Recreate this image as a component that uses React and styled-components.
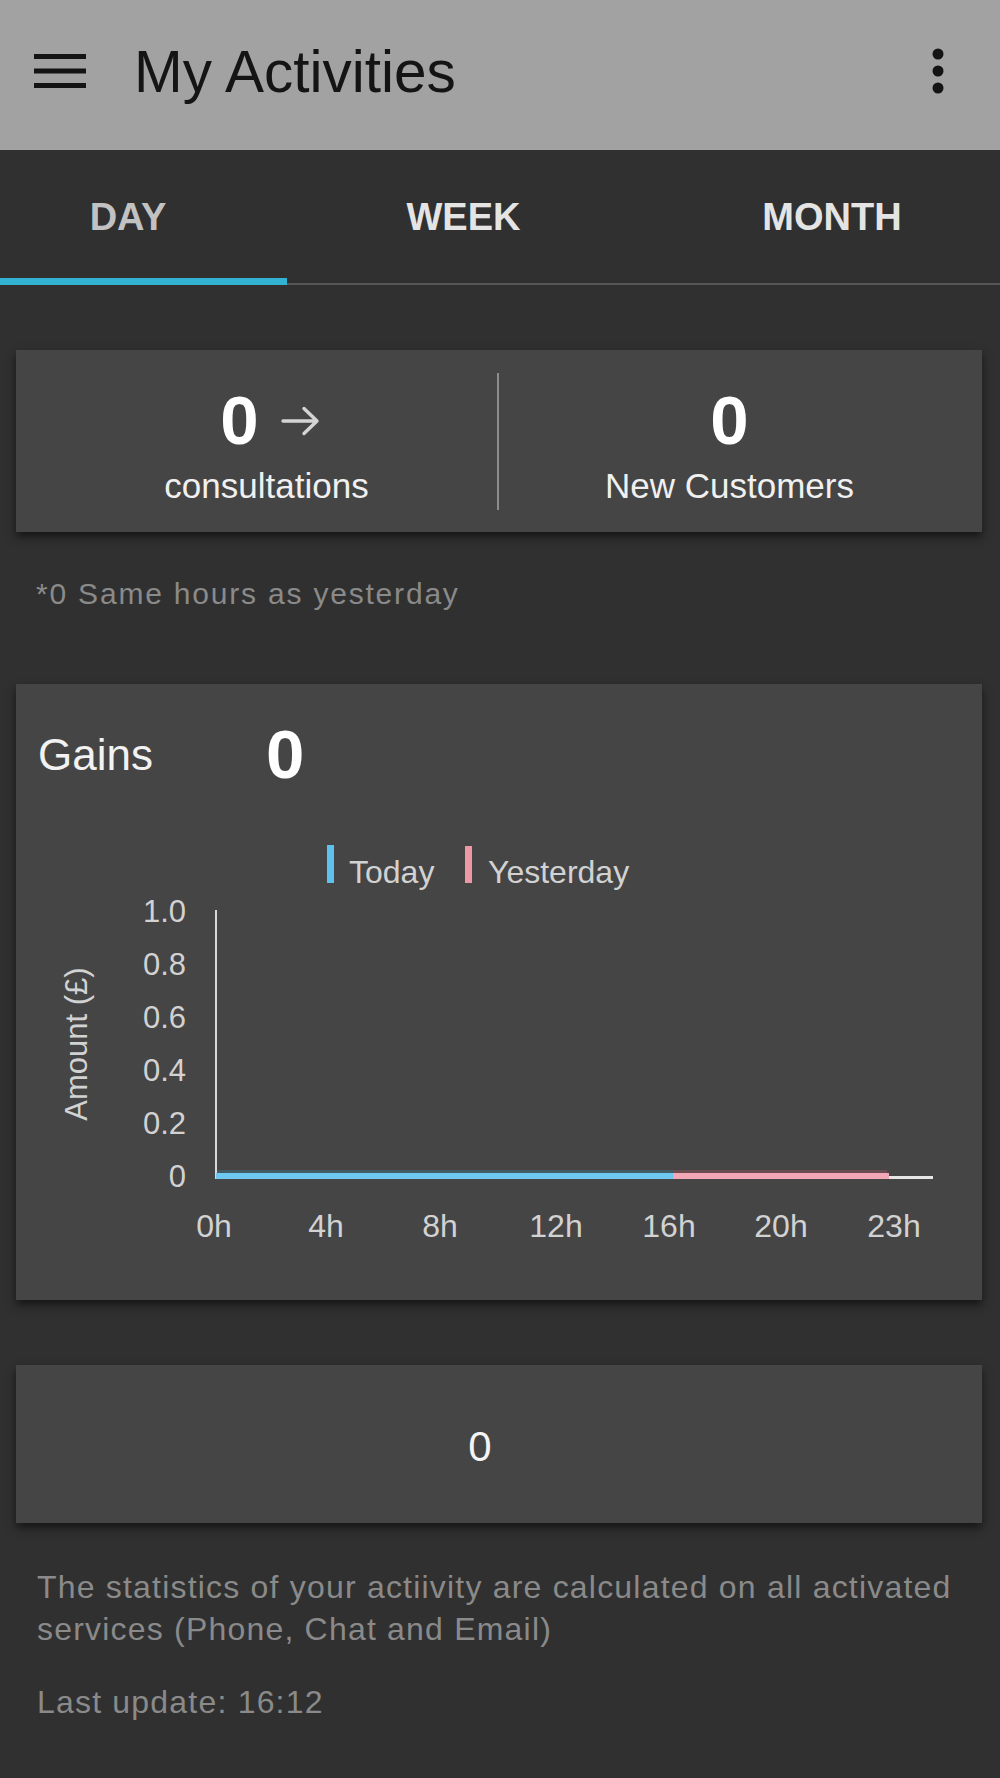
import React from "react";
import styled, { createGlobalStyle } from "styled-components";

const GlobalStyle = createGlobalStyle`
  html, body {
    margin: 0;
    padding: 0;
    background: #303030;
  }
  body {
    font-family: "Liberation Sans", Arial, Helvetica, sans-serif;
  }
  * { box-sizing: border-box; }
`;

const Page = styled.div`
  min-height: 1778px;
  background: #303030;
  display: flex;
  flex-direction: column;
`;

const AppBar = styled.header`
  height: 150px;
  background: #a2a2a2;
  display: flex;
  align-items: center;
  padding: 0 56px 8px 34px;
`;

const MenuIcon = styled.svg`
  display: block;
  flex: none;
`;

const Title = styled.h1`
  margin: 0 0 0 48px;
  font-size: 58.5px;
  line-height: 1;
  font-weight: 400;
  color: #141414;
  flex: 1;
  padding-top: 3px;
`;

const TabBar = styled.nav`
  height: 135px;
  display: flex;
  box-shadow: inset 0 -2px 0 #575757;
`;

const Tab = styled.div`
  width: ${(p) => p.$w}px;
  flex: none;
  display: flex;
  align-items: center;
  justify-content: center;
  padding: 6px ${(p) => p.$pr || 0}px 0 ${(p) => p.$pl || 0}px;
  border-bottom: 7px solid ${(p) => (p.$active ? "#33b3d1" : "transparent")};
  font-size: 38px;
  line-height: 1;
  font-weight: 700;
  color: ${(p) => (p.$active ? "#c2c2c2" : "#e4e4e4")};
`;

const Card = styled.section`
  margin: 0 18px 0 16px;
  background: #454545;
  box-shadow: 0 5px 9px rgba(0, 0, 0, 0.55);
`;

const StatsCard = styled(Card)`
  margin-top: 65px;
  height: 182px;
  display: flex;
  align-items: center;
`;

const StatCol = styled.div`
  flex: 1;
  display: flex;
  flex-direction: column;
  align-items: center;
  padding: 12px ${(p) => p.$pr || 0}px 0 ${(p) => p.$pl || 0}px;
`;

const NumberRow = styled.div`
  display: flex;
  align-items: center;
  gap: 22px;
  height: 66px;
  margin-left: ${(p) => p.$shift || 0}px;
`;

const BigNumber = styled.span`
  font-size: 69px;
  line-height: 66px;
  font-weight: 700;
  color: #ffffff;
`;

const StatLabel = styled.div`
  margin-top: 12px;
  font-size: 35px;
  line-height: 40px;
  color: #f0f0f0;
`;

const Divider = styled.div`
  width: 2px;
  height: 137px;
  background: #8c8c8c;
  flex: none;
`;

const Note = styled.p`
  margin: 44px 0 0 36px;
  font-size: 30px;
  line-height: 36px;
  letter-spacing: 1.8px;
  color: #8a8a8a;
`;

const GainsCard = styled(Card)`
  margin-top: 72px;
  padding-top: 38px;
`;

const GainsRow = styled.div`
  display: flex;
  align-items: center;
  height: 66px;
  padding-left: 22px;
`;

const GainsLabel = styled.span`
  width: 228px;
  font-size: 44px;
  line-height: 66px;
  color: #f2f2f2;
`;

const Chart = styled.svg`
  display: block;
  font-family: "Liberation Sans", Arial, Helvetica, sans-serif;
`;

const TotalCard = styled(Card)`
  margin-top: 65px;
  height: 158px;
  display: flex;
  align-items: center;
  justify-content: center;
  padding: 6px 38px 0 0;
  font-size: 42px;
  line-height: 1;
  color: #f4f4f4;
`;

const Footer = styled.div`
  padding: 43px 20px 0 37px;
  color: #8a8a8a;
  font-size: 32px;
  letter-spacing: 1.2px;
`;

const FooterText = styled.p`
  margin: 0;
  line-height: 42px;
`;

const UpdatedText = styled.p`
  margin: 31px 0 0;
  line-height: 42px;
`;

const yTicks = ["1.0", "0.8", "0.6", "0.4", "0.2", "0"];
const xTicks = [
  ["0h", 198],
  ["4h", 310],
  ["8h", 424],
  ["12h", 540],
  ["16h", 653],
  ["20h", 765],
  ["23h", 878],
];

function GainsChart() {
  return (
    <Chart width="966" height="512" viewBox="0 0 966 512">
      <rect x="311" y="57" width="7" height="38" fill="#5fc2ee" />
      <text x="333" y="95" fontSize="32" fill="#d2d2d2">Today</text>
      <rect x="449" y="58" width="7" height="37" fill="#ee98a6" />
      <text x="472" y="95" fontSize="32" fill="#d2d2d2">Yesterday</text>

      {yTicks.map((t, i) => (
        <text key={t} x="170" y={134 + i * 53} fontSize="31" fill="#d2d2d2" textAnchor="end">
          {t}
        </text>
      ))}

      <text
        transform="translate(71 256) rotate(-90)"
        fontSize="31"
        fill="#d2d2d2"
        textAnchor="middle"
      >
        Amount (£)
      </text>

      <line x1="200" y1="122" x2="200" y2="391" stroke="#d8d8d8" strokeWidth="2" />
      <line x1="200" y1="389.5" x2="917" y2="389.5" stroke="#e6e6e6" strokeWidth="3" />
      <rect x="201" y="382" width="456" height="3" fill="#3d8fb0" opacity="0.3" />
      <rect x="657" y="382" width="214" height="3" fill="#b05868" opacity="0.35" />
      <line x1="200" y1="388" x2="657" y2="388" stroke="#6ec8f0" strokeWidth="6" />
      <line x1="657" y1="388" x2="873" y2="388" stroke="#f2a8b6" strokeWidth="6" />

      {xTicks.map(([t, x]) => (
        <text key={t} x={x} y="449" fontSize="32" fill="#d2d2d2" textAnchor="middle">
          {t}
        </text>
      ))}
    </Chart>
  );
}

export default function App() {
  return (
    <>
      <GlobalStyle />
      <Page>
        <AppBar>
          <MenuIcon width="52" height="34" viewBox="0 0 52 34">
            <rect x="0" y="0" width="52" height="5" fill="#141414" />
            <rect x="0" y="14.5" width="52" height="5" fill="#141414" />
            <rect x="0" y="29" width="52" height="5" fill="#141414" />
          </MenuIcon>
          <Title>My Activities</Title>
          <MenuIcon width="12" height="46" viewBox="0 0 12 46">
            <circle cx="6" cy="6" r="5.5" fill="#141414" />
            <circle cx="6" cy="23" r="5.5" fill="#141414" />
            <circle cx="6" cy="40" r="5.5" fill="#141414" />
          </MenuIcon>
        </AppBar>

        <TabBar>
          <Tab $w={287} $pr={31} $active>DAY</Tab>
          <Tab $w={353}>WEEK</Tab>
          <Tab $w={360} $pl={24}>MONTH</Tab>
        </TabBar>

        <StatsCard>
          <StatCol $pl={20}>
            <NumberRow $shift={7}>
              <BigNumber>0</BigNumber>
              <svg width="39" height="30" viewBox="0 0 39 30">
                <path
                  d="M2 15 H36 M23 2.5 L36 15 L23 27.5"
                  fill="none"
                  stroke="#d4d4d4"
                  strokeWidth="3.4"
                  strokeLinecap="round"
                  strokeLinejoin="round"
                />
              </svg>
            </NumberRow>
            <StatLabel>consultations</StatLabel>
          </StatCol>
          <Divider />
          <StatCol $pr={22}>
            <NumberRow>
              <BigNumber>0</BigNumber>
            </NumberRow>
            <StatLabel>New Customers</StatLabel>
          </StatCol>
        </StatsCard>

        <Note>*0 Same hours as yesterday</Note>

        <GainsCard>
          <GainsRow>
            <GainsLabel>Gains</GainsLabel>
            <BigNumber>0</BigNumber>
          </GainsRow>
          <GainsChart />
        </GainsCard>

        <TotalCard>0</TotalCard>

        <Footer>
          <FooterText>
            The statistics of your actiivity are calculated on all activated services (Phone, Chat and Email)
          </FooterText>
          <UpdatedText>Last update: 16:12</UpdatedText>
        </Footer>
      </Page>
    </>
  );
}
